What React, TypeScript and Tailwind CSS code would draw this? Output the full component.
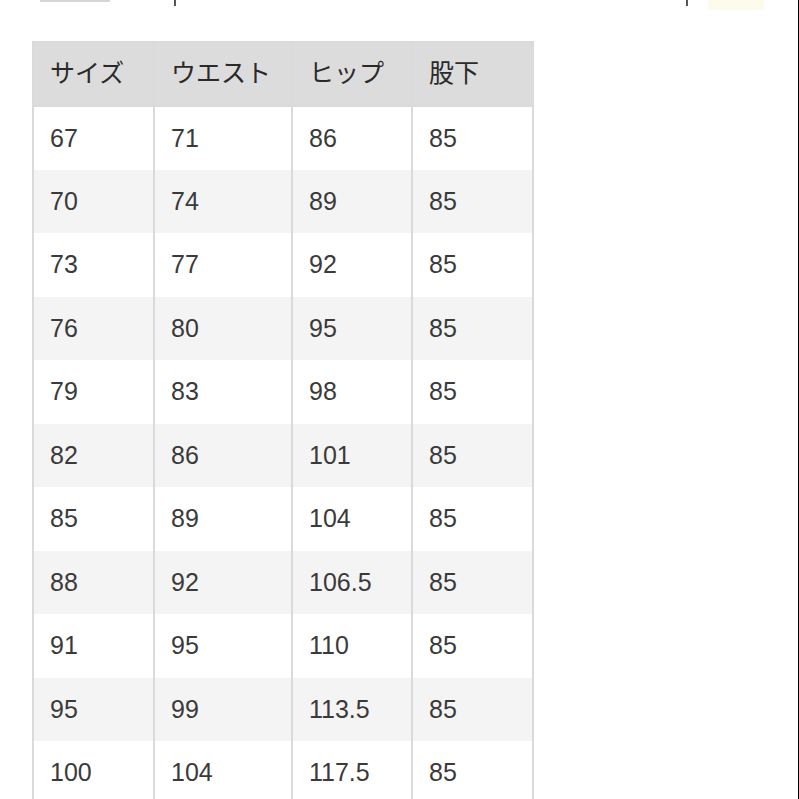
import React from "react";

const head = ["サイズ", "ウエスト", "ヒップ", "股下"];
const rows = [
  ["67", "71", "86", "85"],
  ["70", "74", "89", "85"],
  ["73", "77", "92", "85"],
  ["76", "80", "95", "85"],
  ["79", "83", "98", "85"],
  ["82", "86", "101", "85"],
  ["85", "89", "104", "85"],
  ["88", "92", "106.5", "85"],
  ["91", "95", "110", "85"],
  ["95", "99", "113.5", "85"],
  ["100", "104", "117.5", "85"],
];
const widths = ["w-[121px]", "w-[138px]", "w-[120px]", "w-[121px]"];

export default function App() {
  return (
    <div
      className="w-[799px] h-[799px] overflow-hidden bg-white border-r border-black text-[#3a3a3a]"
      style={{ fontFamily: '"Liberation Sans", "Noto Sans CJK JP", sans-serif' }}
    >
      {/* cut-off line at the top */}
      <div className="h-[41px] flex items-start">
        <div className="ml-[40px] h-[2px] w-[70px] bg-[#d6d6d6]" />
        <div className="ml-[64px] h-[6px] w-[2px] bg-[#555]" />
        <div className="ml-[510px] h-[6px] w-[2px] bg-[#555]" />
        <div className="ml-[20px] h-[10px] w-[56px] bg-[#fdfbec]" />
      </div>
      <table className="ml-[32px] border-collapse table-fixed text-[25px]">
        <thead>
          <tr className="h-[64px] bg-[#dcdcdc]">
            {head.map((h, i) => (
              <th
                key={h}
                className={`${widths[i]} border-2 border-[#dadada] pl-[16px] text-left font-normal text-[#2a2a2a]`}
              >
                {h}
              </th>
            ))}
          </tr>
        </thead>
        <tbody>
          {rows.map((r, ri) => (
            <tr key={ri} className={`h-[63.5px] ${ri % 2 ? "bg-[#f4f4f4]" : "bg-white"}`}>
              {r.map((c, ci) => (
                <td key={ci} className="border-x-2 border-[#dadada] pl-[16px]">
                  {c}
                </td>
              ))}
            </tr>
          ))}
        </tbody>
      </table>
    </div>
  );
}
